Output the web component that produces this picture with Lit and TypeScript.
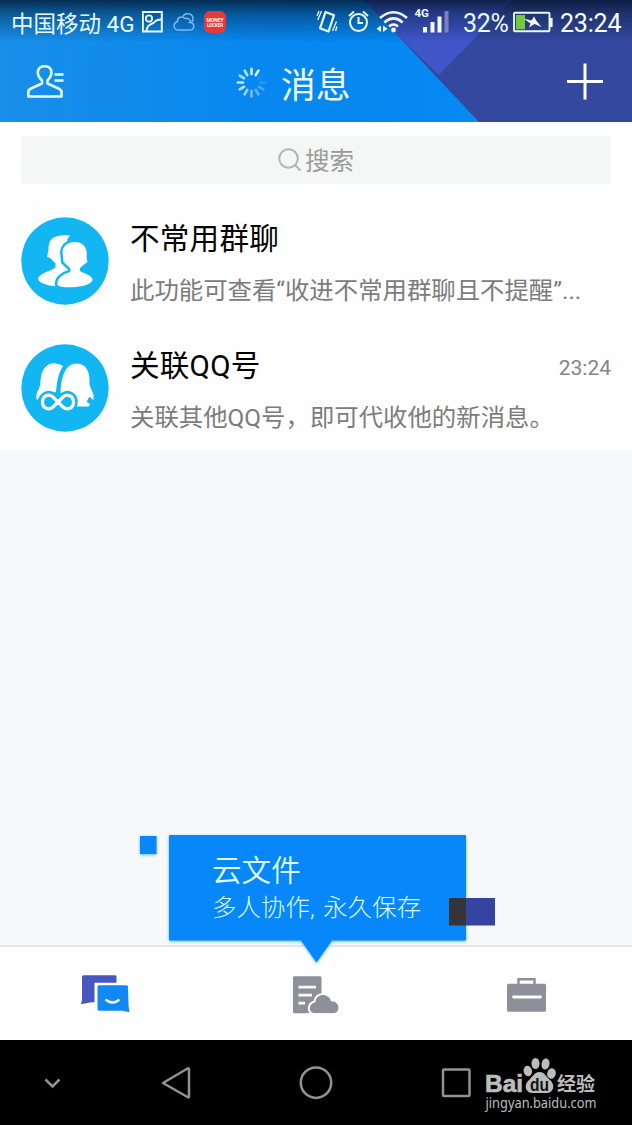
import { LitElement, html, css, svg } from "lit";
import { customElement, property } from "lit/decorators.js";

const FONT = css`Roboto, "Noto Sans CJK SC", sans-serif`;

@customElement("status-bar")
class StatusBar extends LitElement {
  static styles = css`
    :host { display: flex; height: 44px; padding: 0 11px; align-items: center; justify-content: space-between; color: #e9fbff; font: 22.5px/44px ${FONT}; white-space: pre; }
    svg { display: block; fill: none; stroke: #e9fbff; flex: none; }
    .side { display: flex; align-items: center; height: 44px; }
    .carrier { width: 131px; padding-top: 3px; }
    .battery-text { width: 50px; font-size: 25px; letter-spacing: -0.3px; padding: 3px 0 0 1px; }
    .clock { width: 61px; font-size: 25px; letter-spacing: -0.2px; padding-top: 3px; color: #fff; }
    .tag { font: bold 11.5px Roboto, sans-serif; fill: #e9fbff; stroke: none; }
    .logo { font: bold 5.6px Roboto, sans-serif; fill: #fff; stroke: none; }
    .solid { fill: #f1fbff; stroke: none; }
    .dim { fill: #7c82ba; stroke: none; }
    .faint { stroke: #79bbef; }
    .red { fill: #e53a35; stroke: none; }
    .green { fill: #76c83c; stroke: none; }
  `;
  render() {
    return html`
      <div class="side">
        <div class="carrier">中国移动 4G</div>
        <svg width="90" height="44" viewBox="142 0 90 44">
          <rect x="142.800" y="12" width="19" height="19.500" stroke-width="2"/>
          <circle cx="149" cy="18.500" r="3.100" stroke-width="1.800"/>
          <path d="M146.500 31C147 24 151.500 24.500 154 22.500C156 20.500 156 19.500 161 19.500" stroke-width="2"/>
          <path class="faint" stroke-width="1.500" d="M179 30C173 30 172.500 23.500 177.500 21.500C177 17 182 15.500 185 18.500C190 17.500 191 22 190 22.500C195 23 195.500 30 189 30Z"/>
          <path class="faint" stroke-width="1.500" d="M183 16.500C185 12 193 13 193 19C193 20.500 192.500 21.500 191.500 22.500"/>
          <rect class="red" x="204" y="11" width="22" height="22" rx="6"/>
          <text class="logo" x="206.500" y="21.500" textLength="17" lengthAdjust="spacingAndGlyphs">MONEY</text>
          <text class="logo" x="207" y="26.800" textLength="16" lengthAdjust="spacingAndGlyphs">LOCKER</text>
        </svg>
      </div>
      <div class="side">
        <svg width="146" height="44" viewBox="316 0 146 44">
          <path d="M325.500 12L334 15.200L328.500 31.500L320 28.300Z" stroke-width="2.200" stroke-linejoin="round"/>
          <path d="M321.500 11L317.800 20M319 11L317 16M332.500 31L336.500 21.500M335.500 31L337 26.500" stroke-width="1.300"/>
          <circle cx="358.500" cy="22.500" r="8.500" stroke-width="2"/>
          <path d="M358.500 17V23H363M349 16L354 11.500M363 11.500L368 16" stroke-width="2"/>
          <path d="M380 18Q393.500 6.500 407 18M384.300 22.400Q393.500 14.500 402.700 22.400M389 26.500Q393.500 22.500 398 26.500" stroke-width="2.600"/>
          <circle class="solid" cx="393.500" cy="30" r="2.400"/>
          <path class="solid" d="M381 25.500V32L376.500 28.700ZM383 25.500V32L387.500 28.700Z"/>
          <text class="tag" x="414.500" y="16.500">4G</text>
          <path class="solid" d="M423 27h4v5.500h-4zM430.500 22h4v10.500h-4zM437.500 16.500h4v16h-4z"/>
          <rect class="dim" x="444.500" y="11" width="4" height="21.500"/>
        </svg>
        <div class="battery-text">32%</div>
        <svg width="47" height="44" viewBox="512 0 47 44">
          <rect x="513" y="12.800" width="35.500" height="18.500" stroke-width="1.900" rx="1"/>
          <rect class="green" x="515" y="15" width="9" height="14.300"/>
          <path class="solid" d="M549 18h2.600v9H549zM522.500 18.500L530.500 20.500L533 16.500L535.500 21L540.500 27L533.500 24L528 27.500L529.500 23.500Z"/>
        </svg>
        <div class="clock">23:24</div>
      </div>`;
  }
}

@customElement("title-bar")
class TitleBar extends LitElement {
  static styles = css`
    :host { display: grid; grid-template-columns: 209px 1fr 38px; height: 78px; align-items: center; padding: 0 28px 0 26px; }
    svg { display: block; fill: none; stroke: #e1ffff; stroke-width: 2.600; }
    .title { display: flex; align-items: center; gap: 14px; color: #f0feff; font: 34.8px/72px ${FONT}; }
    .title span { padding-top: 6px; }
    .plus { stroke: #fff; stroke-width: 3; }
  `;
  render() {
    const spokes = [1, .9, .8, .7, .85, .75, .65, .5, .4, .28, .15, .06];
    return html`
      <svg width="40" height="78" viewBox="26 44 40 78">
        <path stroke-linejoin="round" d="M42 80.500C34.500 73 38 66.300 44.700 66.300S54.500 73 47.500 80.500V83.500L58.500 88.500Q61.500 90 61.500 92V96.500H28.300V92Q28.300 90 31 88.500L42 83.500Z"/>
        <path d="M54.500 74.500H63.500M54.500 80.500H63.500"/>
      </svg>
      <div class="title">
        <svg width="32" height="78" viewBox="235 44 32 78">
          ${spokes.map((o, i) => {
            const a = ((30 - i * 30 - 90) * Math.PI) / 180;
            const c = Math.cos(a), s = Math.sin(a);
            return svg`<line stroke-linecap="round" opacity=${o} x1=${251.5 + c * 8.5} y1=${82.5 + s * 8.5} x2=${251.5 + c * 13.7} y2=${82.5 + s * 13.7}/>`;
          })}
        </svg>
        <span>消息</span>
      </div>
      <svg class="plus" width="38" height="78" viewBox="566 44 38 78"><path d="M567 81.500H603M585 63.500V99.500"/></svg>`;
  }
}

@customElement("chat-row")
class ChatRow extends LitElement {
  @property() name = "";
  @property() text = "";
  @property() time = "";
  @property() kind = "group";
  static styles = css`
    :host { display: flex; height: 127px; padding: 0 21px; gap: 21px; box-sizing: border-box; font-family: ${FONT}; }
    .avatar { flex: none; width: 88px; height: 88px; margin-top: 19px; display: block; }
    .disc { fill: #12b6f3; }
    .white { fill: #fff; }
    .outlined { fill: #fff; stroke: #12b6f3; stroke-width: 5; paint-order: stroke; }
    .gap { fill: none; stroke: #12b6f3; }
    .loop { fill: none; stroke: #fff; stroke-width: 3.200; }
    .body { flex: 1; min-width: 0; padding-top: 18px; }
    .top { display: flex; justify-content: space-between; align-items: center; height: 46px; }
    .name { font-size: 29.6px; line-height: 46px; letter-spacing: 0.2px; color: #000; white-space: nowrap; }
    .time { font-size: 21px; color: #858585; padding-top: 3px; }
    .text { font-size: 24.4px; line-height: 40px; color: #7c7c7c; white-space: nowrap; margin-top: 9px; }
  `;
  render() {
    const art = this.kind === "group"
      ? svg`
        <path class="white" d="M49 18.500L46 23L50 30L48 69L32 69C24 68 17 65 17 61.500C19 56 30 54 34.500 50.500V46C31 44 30 40 26 40L27.500 33C27 20 35 17.500 49 18.500Z"/>
        <path class="outlined" d="M54 25C62 25 67 31 65.500 40L66.500 45C64 46 63 48 60 50Q57 53.500 60.500 55C66 57 72 59.500 71.500 63C70 71 40 72 36.500 68C35.500 62 41 57.500 48 55.500Q51 53.500 48.500 50.500C45 47.500 43.500 46 42.500 45L42 39C40 31 45 25 54 25Z"/>`
      : svg`
        <path class="white" d="M42 22C32 16 22 20 20 33C19 39 19.500 41 18 44.500C15.500 48 14.500 54 16 56L20.500 51L35 48C36 38 37 30 42 22Z"/>
        <path class="white" d="M39.500 49C40 38 42 19.500 56 19.500C65 19.500 68.500 28 68.500 36C68 40 69 43 71 47C73 51 73 55 72 56L68.500 52.500L65.500 58C69 59 70 62 67 62.500H54L50 50Z"/>
        <path class="gap" stroke-width="8.500" d="M37 58L32 53C27.500 49 21.500 52 21.500 58S27.500 67 32 63L42 53C46.500 49 52.500 52 52.500 58S46.500 67 42 63Z"/>
        <path class="loop" d="M37 58L32 53C27.500 49 21.500 52 21.500 58S27.500 67 32 63L42 53C46.500 49 52.500 52 52.500 58S46.500 67 42 63Z"/>`;
    return html`
      <svg class="avatar" viewBox="0 0 88 88"><circle class="disc" cx="44" cy="44" r="43.700"/>${art}</svg>
      <div class="body">
        <div class="top"><div class="name">${this.name}</div><div class="time">${this.time}</div></div>
        <div class="text">${this.text}</div>
      </div>`;
  }
}

@customElement("tab-bar")
class TabBar extends LitElement {
  static styles = css`
    :host { display: grid; grid-template-columns: repeat(3, 1fr); height: 95px; box-sizing: border-box; border-top: 2px solid #e5e6e8; background: #fefefe; align-items: center; justify-items: center; }
    svg { display: block; }
    .indigo { fill: #4658bd; }
    .blue { fill: #1288f5; }
    .grey { fill: #8e8f98; }
    .white { fill: #fefefe; }
    .line { fill: none; stroke: #fefefe; }
    .edge { fill: none; stroke: #8e8f98; }
  `;
  render() {
    return html`
      <svg width="52" height="44" viewBox="79.500 971.300 52 44">
        <path class="indigo" d="M84 974.500H116Q117 974.500 117 976V1001L92 1001.500L81.500 1003.500L82.500 999V976Q82.500 974.500 84 974.500Z"/>
        <path class="white" d="M95 982H132V1016H95Z"/>
        <path class="blue" d="M99.500 984.500H127Q128.500 984.500 128.500 986L129 1005L130 1011.500L123 1010H99.500Q98 1010 98 1008V986Q98 984.500 99.500 984.500Z"/>
        <path class="line" stroke-width="2.600" stroke-linecap="round" d="M107 999.500Q113 1004 119 999.500"/>
      </svg>
      <svg width="50" height="44" viewBox="291 971.300 50 44">
        <path class="grey" d="M294 975.500H320Q321.500 975.500 321.500 977V1012.500H294Q293 1012.500 293 1011V977Q293 975.500 294 975.500Z"/>
        <path class="line" stroke-width="2.800" d="M298.500 986.500H316M298.500 994.500H312M298.500 1002.500H305"/>
        <path class="grey" stroke="#fefefe" stroke-width="4" paint-order="stroke" d="M315 1012.500C308 1012.500 308 1002.500 315.500 1001.500C316 992 329 992 331 1000.500C340 1000 341 1012.500 333 1012.500Z"/>
        <path class="white" d="M306 1012.500H341V1016H306Z"/>
      </svg>
      <svg width="42" height="44" viewBox="506 971.300 42 44">
        <path class="edge" stroke-width="2.400" d="M518.500 984V978.500H534.500V984"/>
        <rect class="grey" x="507" y="983" width="39" height="28" rx="1.500"/>
        <path class="line" stroke-width="2.800" stroke-linecap="round" d="M513.500 996.300H540.500"/>
      </svg>`;
  }
}

@customElement("system-nav")
class SystemNav extends LitElement {
  static styles = css`
    :host { display: block; height: 85px; background: #000; }
    svg { display: block; fill: none; stroke: #929292; stroke-width: 2.500; }
    .grey { fill: #bcbcbc; stroke: none; }
    .latin { font: bold 24.5px "Liberation Sans", sans-serif; stroke: #bcbcbc; stroke-width: 0.700; }
    .dark { fill: #111; stroke: none; font: bold 18px "Liberation Sans", sans-serif; }
    .han { font: bold 19px "Noto Sans CJK SC", sans-serif; }
    .url { font: 14px "Noto Sans", sans-serif; }
  `;
  render() {
    return html`<svg width="632" height="85" viewBox="0 1040 632 85">
      <path d="M45.500 1079.500L52.500 1086.500L59.500 1079.500"/>
      <path stroke-linejoin="round" d="M163 1083L187.500 1068.500Q189 1068 189 1069.500V1096.500Q189 1098 187.500 1097Z"/>
      <circle cx="316" cy="1082.700" r="15.200"/>
      <rect x="443" y="1069.500" width="26.500" height="26.500" rx="1"/>
      <text class="grey latin" x="485" y="1092" textLength="38" lengthAdjust="spacingAndGlyphs">Bai</text>
      <ellipse class="grey" cx="527.800" cy="1071" rx="4.200" ry="5.300" transform="rotate(-12 527.800 1071)"/>
      <ellipse class="grey" cx="535.500" cy="1063.500" rx="4" ry="5.500"/>
      <ellipse class="grey" cx="545.500" cy="1064" rx="4" ry="5.500" transform="rotate(12 545.500 1064)"/>
      <ellipse class="grey" cx="551.500" cy="1073.500" rx="4.300" ry="5.300" transform="rotate(15 551.500 1073.500)"/>
      <path class="grey" d="M539.500 1072C545 1072 546 1077 550 1080C556 1085 553 1093 547 1093H533C525 1093 524 1085 528 1081C532 1078 534 1072 539.500 1072Z"/>
      <text class="dark" x="530" y="1090.500" textLength="19" lengthAdjust="spacingAndGlyphs">du</text>
      <text class="grey han" x="557" y="1090.500" textLength="38">经验</text>
      <text class="grey url" x="485.500" y="1107.500" textLength="111" lengthAdjust="spacingAndGlyphs">jingyan.baidu.com</text>
    </svg>`;
  }
}

@customElement("app-root")
class AppRoot extends LitElement {
  static styles = css`
    :host { display: flex; flex-direction: column; width: 632px; height: 1125px; overflow: hidden; position: relative; background: #f7f8fa; font-family: ${FONT}; }
    .header { position: relative; height: 122px; flex: none; }
    .art { position: absolute; inset: 0; }
    .bars { position: relative; }
    .list { background: #fefefe; height: 328px; flex: none; padding-top: 14px; box-sizing: border-box; }
    .search { margin: 0 21px 14px; height: 48px; background: #f5f6f6; display: flex; align-items: center; justify-content: center; gap: 3px; color: #9b9b9b; font-size: 24.5px; line-height: 46px; }
    .search span { padding-top: 3px; }
    .search svg { fill: none; stroke: #b5b5b5; stroke-width: 2; }
    .empty { flex: 1; }
    .tip { position: absolute; left: 130px; top: 825px; width: 380px; height: 145px; }
    .tip svg { position: absolute; left: 0; top: 0; display: block; }
    .copy { position: relative; padding: 26px 0 0 82px; color: #dffcff; white-space: nowrap; }
    .big { font-size: 29.6px; line-height: 40px; font-weight: 350; }
    .small { font-size: 24.4px; line-height: 34px; font-weight: 300; letter-spacing: 0.1px; word-spacing: 2.500px; }
    .glow { filter: drop-shadow(0 1px 1.500px #58bcf4); }
  `;
  render() {
    return html`
      <div class="header">
        <svg class="art" width="632" height="122" viewBox="0 0 632 122">
          <defs>
            <linearGradient id="blue" x1="0" x2="1"><stop offset="0" stop-color="#188fe9"/><stop offset=".55" stop-color="#0787ef"/><stop offset="1" stop-color="#0589f3"/></linearGradient>
            <linearGradient id="shade" x1="0" x2="0" y1="0" y2="1"><stop offset="0" stop-color="#021227" stop-opacity=".78"/><stop offset=".35" stop-color="#02182f" stop-opacity=".42"/><stop offset="1" stop-color="#02182f" stop-opacity="0"/></linearGradient>
          </defs>
          <rect width="632" height="122" fill="#3448a0"/>
          <path d="M360 0H512L439 75Z" fill="#4055c8"/>
          <path d="M0 0H364L479 122H0Z" fill="url(#blue)"/>
          <rect width="632" height="42" fill="url(#shade)"/>
        </svg>
        <div class="bars"><status-bar></status-bar><title-bar></title-bar></div>
      </div>
      <div class="list">
        <div class="search">
          <svg width="24" height="26" viewBox="0 0 24 26"><circle cx="10.500" cy="11.500" r="9.300"/><path d="M17 18L22.500 23.500"/></svg>
          <span>搜索</span>
        </div>
        <chat-row kind="group" name="不常用群聊" text="此功能可查看“收进不常用群聊且不提醒”..."></chat-row>
        <chat-row kind="linked" name="关联QQ号" text="关联其他QQ号，即可代收他的新消息。" time="23:24"></chat-row>
      </div>
      <div class="empty"></div>
      <tab-bar></tab-bar>
      <system-nav></system-nav>
      <div class="tip">
        <svg width="380" height="145" viewBox="130 825 380 145">
          <g class="glow">
            <path fill="#0787fa" d="M140 836h16.500v18H140z"/>
            <path fill="#0787fa" d="M170 835H465Q466 835 466 836V939.500Q466 940.500 465 940.500H332L316.500 962.500L301 940.500H170Q169 940.500 169 939.500V836Q169 835 170 835Z"/>
          </g>
          <path fill="#353539" d="M449 898h17v27.500h-17z"/>
          <path fill="#3543a2" d="M466 898h29v27.500h-29z"/>
        </svg>
        <div class="copy"><div class="big">云文件</div><div class="small">多人协作, 永久保存</div></div>
      </div>`;
  }
}
